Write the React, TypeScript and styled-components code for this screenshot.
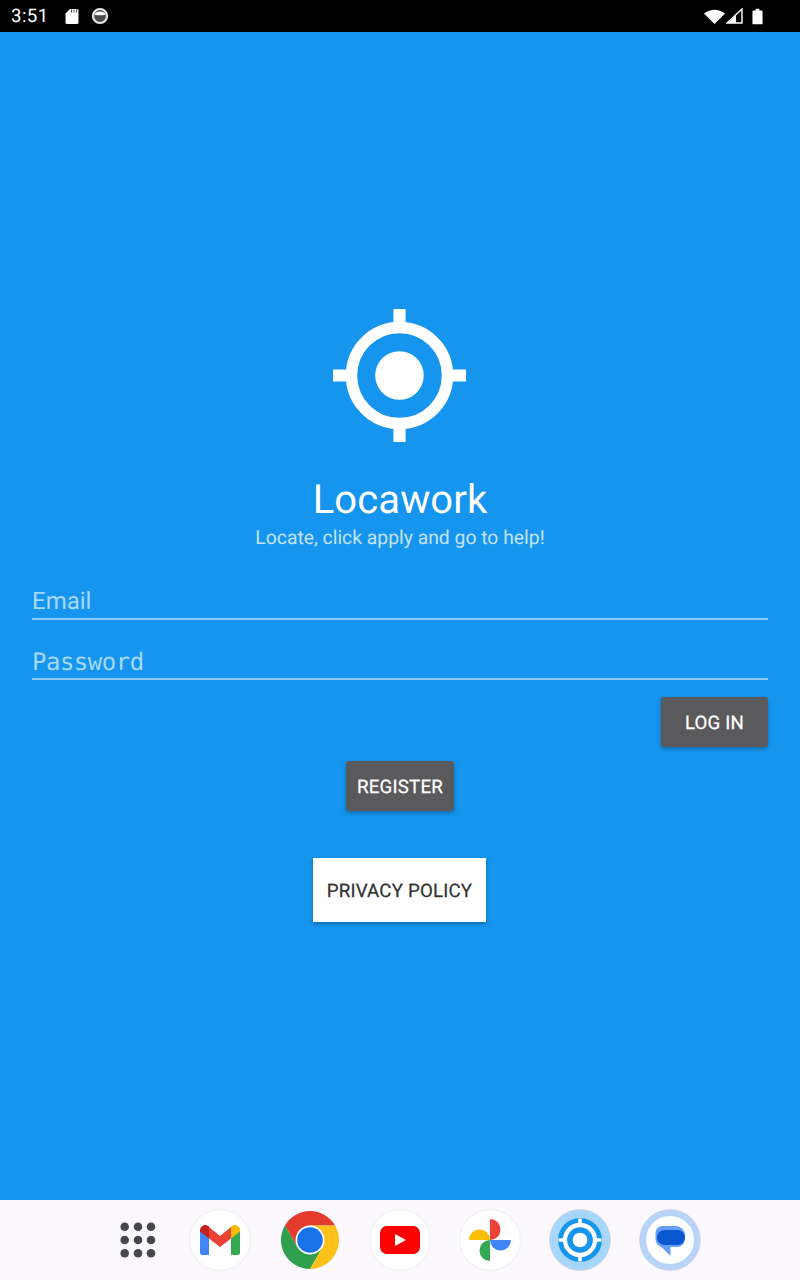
import React from 'react';
import styled, { createGlobalStyle } from 'styled-components';

const GlobalStyle = createGlobalStyle`
  html, body {
    margin: 0;
    padding: 0;
    background: #1595ee;
    text-rendering: geometricPrecision;
  }
  * {
    box-sizing: border-box;
  }
`;

const Screen = styled.div`
  width: 800px;
  height: 1280px;
  display: flex;
  flex-direction: column;
  overflow: hidden;
  font-family: Roboto, 'Liberation Sans', sans-serif;
`;

const StatusBar = styled.div`
  height: 32px;
  flex: none;
  background: #000;
  color: #fff;
  display: flex;
  align-items: center;
  padding: 0 37px 0 11px;
`;

const Clock = styled.span`
  font-size: 18.67px;
  letter-spacing: 0.4px;
  width: 54px;
`;

const StatusSpacer = styled.div`
  flex: 1;
`;

const StatusIcon = styled.svg<{ $gap?: number }>`
  display: block;
  flex: none;
  margin-left: ${({ $gap }) => $gap ?? 0}px;
`;

const Main = styled.main`
  flex: 1;
  background: #1595ee;
  padding: 277px 32px 0;
  display: flex;
  flex-direction: column;
  align-items: center;
`;

const Logo = styled.svg`
  display: block;
  flex: none;
  margin-right: 1px;
`;

const Title = styled.h1`
  margin: 34px 0 0;
  font-size: 40px;
  line-height: 48px;
  font-weight: 400;
  letter-spacing: 0.12px;
  color: #fff;
`;

const Tagline = styled.p`
  margin: 1px 0 0;
  font-size: 19.33px;
  line-height: 26px;
  font-weight: 400;
  color: #c4e3fb;
`;

const Field = styled.label<{ $top: number; $mono?: boolean }>`
  display: block;
  width: 100%;
  height: 36px;
  margin-top: ${({ $top }) => $top}px;
  border-bottom: 2px solid #8ccbf7;
  color: #a6d8fa;
  font-size: 24px;
  line-height: ${({ $mono }) => ($mono ? 36 : 34)}px;
  letter-spacing: ${({ $mono }) => ($mono ? -0.5 : 0)}px;
  font-family: ${({ $mono }) =>
    $mono ? "'DejaVu Sans Mono', monospace" : 'Roboto, sans-serif'};
`;

const ButtonRow = styled.div<{ $top: number; $align: string; $inset?: number }>`
  width: 100%;
  display: flex;
  justify-content: ${({ $align }) => $align};
  margin-top: ${({ $top }) => $top}px;
  padding-right: ${({ $inset }) => $inset ?? 0}px;
`;

const Button = styled.button<{ $width: number; $light?: boolean }>`
  width: ${({ $width }) => $width}px;
  height: ${({ $light }) => ($light ? 64 : 50)}px;
  padding: 2px 0 0;
  border: none;
  border-radius: ${({ $light }) => ($light ? 0 : 3)}px;
  background: ${({ $light }) => ($light ? '#fff' : '#5a5a5c')};
  color: ${({ $light }) => ($light ? '#333' : '#fff')};
  font-family: Roboto, sans-serif;
  font-size: 18.67px;
  font-weight: 400;
  letter-spacing: 0.2px;
  -webkit-text-stroke: 0.25px currentColor;
  text-rendering: geometricPrecision;
  box-shadow: 0 2px 4px rgba(0, 0, 0, 0.28);
`;

const Dock = styled.nav`
  height: 80px;
  flex: none;
  background: #fbf8fe;
  display: flex;
  align-items: center;
  padding-left: 101px;
`;

const DockSlot = styled.div<{ $width?: number }>`
  width: ${({ $width }) => $width ?? 90}px;
  display: flex;
  justify-content: center;
`;

const AppCircle = styled.div`
  width: 60px;
  height: 60px;
  border-radius: 50%;
  background: #fff;
  box-shadow: 0 0 2px rgba(0, 0, 0, 0.12);
`;

const AppIcon = styled.svg`
  display: block;
`;

const Target = () => (
  <Logo width="133" height="133" viewBox="0 0 133 133">
    <circle cx="66.5" cy="66.5" r="48" fill="none" stroke="#fff" strokeWidth="11.500" />
    <circle cx="66.5" cy="66.5" r="24.300" fill="#fff" />
    <path d="M60.400 0h12.200v16H60.400zM60.400 117h12.200v16H60.400zM0 60.400h16v12.200H0zM117 60.400h16v12.200h-16z" fill="#fff" />
  </Logo>
);

const AppsGrid = () => (
  <AppIcon width="36" height="36" viewBox="0 0 36 36">
    {[4.7, 18, 31.2].flatMap((y) =>
      [4.7, 18, 31].map((x) => <circle key={`${x}-${y}`} cx={x} cy={y} r="4.3" fill="#47464f" />)
    )}
  </AppIcon>
);

const Gmail = () => (
  <AppCircle>
    <AppIcon width="60" height="60" viewBox="0 0 60 60">
      <path d="M10 21a5.5 5.5 0 0 1 9-4l0 28h-6.500a2.500 2.500 0 0 1-2.500-2.500z" fill="#4285f4" />
      <path d="M50 21a5.500 5.500 0 0 0-9-4l0 28h6.500a2.500 2.500 0 0 0 2.500-2.500z" fill="#34a853" />
      <path d="M19 17l11 9 11-9v11.500l-11 8.500-11-8.500z" fill="#ea4335" />
      <path d="M10 21c0-5.500 5.500-8 9-4.500v12l-9-7z" fill="#c5221f" />
      <path d="M50 21c0-5.500-5.500-8-9-4.500v12l9-7z" fill="#fbbc04" />
    </AppIcon>
  </AppCircle>
);

const Chrome = () => (
  <AppIcon width="60" height="60" viewBox="0 0 60 60">
    <path d="M4.900 15.500A29 29 0 0 1 55.100 15.500L30 15.500 17.500 37.200z" fill="#e33b2e" />
    <path d="M4.900 15.500A29 29 0 0 0 30 59L42.500 37.200H17.500z" fill="#2fa04e" />
    <path d="M55.100 15.500A29 29 0 0 1 30 59L42.500 37.200 30 15.500z" fill="#fdc11a" />
    <circle cx="30" cy="30" r="14.500" fill="#fff" />
    <circle cx="30" cy="30" r="12.800" fill="#1a73e8" />
  </AppIcon>
);

const YouTube = () => (
  <AppCircle>
    <AppIcon width="60" height="60" viewBox="0 0 60 60">
      <rect x="10" y="16" width="40" height="28" rx="7" fill="#f00" />
      <path d="M25 24l11 6-11 6z" fill="#fff" />
    </AppIcon>
  </AppCircle>
);

const Photos = () => (
  <AppCircle>
    <AppIcon width="60" height="60" viewBox="0 0 60 60">
      <path d="M30 9a10.500 10.500 0 0 1 0 21z" fill="#ea4335" />
      <path d="M30 30h21a10.500 10.500 0 0 1-21 0z" fill="#4285f4" />
      <path d="M30 30v21a10.500 10.500 0 0 1 0-21z" fill="#34a853" />
      <path d="M30 30H9a10.500 10.500 0 0 1 21 0z" fill="#fbbc04" />
    </AppIcon>
  </AppCircle>
);

const LocaworkApp = () => (
  <AppIcon width="62" height="62" viewBox="0 0 62 62">
    <circle cx="31" cy="31" r="30.500" fill="#a6d6f9" stroke="#d8d0d4" strokeWidth="0.600" />
    <circle cx="31" cy="31" r="22" fill="#1595ee" />
    <circle cx="31" cy="31" r="15" fill="none" stroke="#fff" strokeWidth="4.300" />
    <circle cx="31" cy="31" r="7.300" fill="#fff" />
    <path d="M29.200 9.500h3.600v5h-3.600zM29.200 47.500h3.600v5h-3.600zM9.500 29.200h5v3.600h-5zM47.500 29.200h5v3.600h-5z" fill="#fff" />
  </AppIcon>
);

const Messages = () => (
  <AppIcon width="62" height="62" viewBox="0 0 62 62">
    <circle cx="31" cy="31" r="30.500" fill="#b9d4f9" stroke="#d8d0d4" strokeWidth="0.600" />
    <circle cx="31" cy="31" r="24" fill="#fff" />
    <path d="M24 17h13a9 9 0 0 1 9 9v4a8 8 0 0 1-8 8h-6.500v9l-9-9a9 9 0 0 1-6-8v-6a7 7 0 0 1 7.500-7z" fill="#669df6" />
    <rect x="18" y="21" width="28" height="15" rx="7.500" fill="#0b57d0" />
  </AppIcon>
);

export default function App() {
  return (
    <Screen>
      <GlobalStyle />
      <StatusBar>
        <Clock>3:51</Clock>
        <StatusIcon width="14" height="16" viewBox="0 0 14 16">
          <path d="M5 1h7a1.500 1.500 0 0 1 1.500 1.500v12a1.500 1.500 0 0 1-1.500 1.500H2a1.500 1.500 0 0 1-1.500-1.500V5.500z" fill="#fff" />
          <path d="M6.500 1.500v3M9 1.500v3M11.500 1.500v3" stroke="#000" strokeWidth="0.700" />
        </StatusIcon>
        <StatusIcon $gap={12} width="18" height="18" viewBox="0 0 18 18">
          <circle cx="9" cy="9" r="7" fill="#4a4a4a" stroke="#e8e8e8" strokeWidth="2.200" />
          <path d="M3.500 7.500a5.500 3 0 0 1 11 0c0 .5-1.500.8-5.500.8s-5.500-.3-5.500-.8z" fill="#fff" />
        </StatusIcon>
        <StatusSpacer />
        <StatusIcon width="21" height="15" viewBox="0 0 21 15">
          <path d="M0 4.500Q10.500-3 21 4.500L10.500 15z" fill="#fff" />
        </StatusIcon>
        <StatusIcon $gap={1} width="17" height="16" viewBox="0 0 17 16">
          <path d="M16 1v14H1z" fill="none" stroke="#fff" strokeWidth="1.400" />
          <path d="M10 15V7.500L2 15z" fill="#fff" />
        </StatusIcon>
        <StatusIcon $gap={9} width="11" height="17" viewBox="0 0 12 17">
          <path d="M4 0h4v2h2.500a1 1 0 0 1 1 1v13a1 1 0 0 1-1 1h-9a1 1 0 0 1-1-1V3a1 1 0 0 1 1-1H4z" fill="#fff" />
        </StatusIcon>
      </StatusBar>

      <Main>
        <Target />
        <Title>Locawork</Title>
        <Tagline>Locate, click apply and go to help!</Tagline>
        <Field $top={33}>Email</Field>
        <Field $top={24} $mono>Password</Field>
        <ButtonRow $top={17} $align="flex-end">
          <Button $width={107}>LOG IN</Button>
        </ButtonRow>
        <ButtonRow $top={14} $align="center">
          <Button $width={108}>REGISTER</Button>
        </ButtonRow>
        <ButtonRow $top={47} $align="center" $inset={1}>
          <Button $width={173} $light>PRIVACY POLICY</Button>
        </ButtonRow>
      </Main>

      <Dock>
        <DockSlot $width={74}><AppsGrid /></DockSlot>
        <DockSlot><Gmail /></DockSlot>
        <DockSlot><Chrome /></DockSlot>
        <DockSlot><YouTube /></DockSlot>
        <DockSlot><Photos /></DockSlot>
        <DockSlot><LocaworkApp /></DockSlot>
        <DockSlot><Messages /></DockSlot>
      </Dock>
    </Screen>
  );
}
